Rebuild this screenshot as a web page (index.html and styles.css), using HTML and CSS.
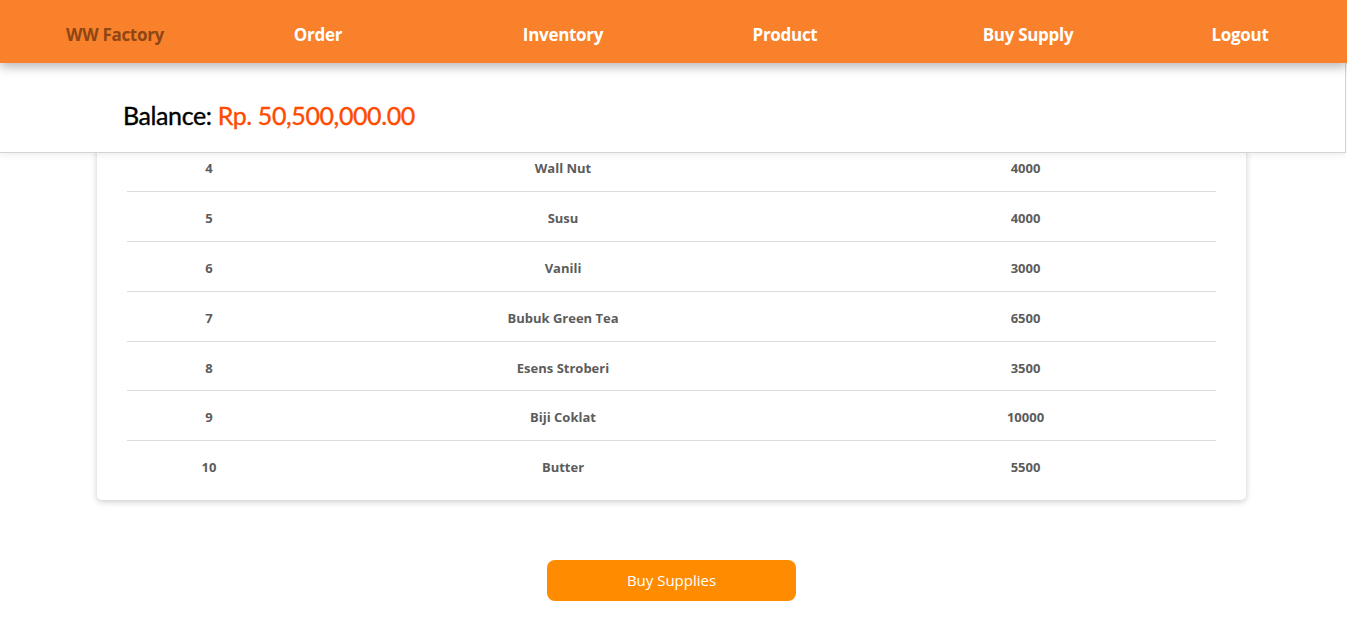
FILE: index.html
```html
<!DOCTYPE html>
<html lang="en">
<head>
<meta charset="utf-8">
<title>Buy Supply - WW Factory</title>
<link rel="stylesheet" href="styles.css">
</head>
<body>
<header class="top">
  <nav class="nav">
    <a class="nav-item brand">WW Factory</a>
    <a class="nav-item">Order</a>
    <a class="nav-item">Inventory</a>
    <a class="nav-item">Product</a>
    <a class="nav-item">Buy Supply</a>
    <a class="nav-item">Logout</a>
  </nav>
  <div class="balance-bar">
    <span class="balance-label">Balance:</span> <span class="balance-amount">Rp. 50,500,000.00</span>
  </div>
</header>
<main class="main">
  <section class="card">
    <table class="supply-table">
      <tbody>
        <tr><td class="c-id">4</td><td class="c-name">Wall Nut</td><td class="c-price">4000</td></tr>
        <tr><td class="c-id">5</td><td class="c-name">Susu</td><td class="c-price">4000</td></tr>
        <tr><td class="c-id">6</td><td class="c-name">Vanili</td><td class="c-price">3000</td></tr>
        <tr><td class="c-id">7</td><td class="c-name">Bubuk Green Tea</td><td class="c-price">6500</td></tr>
        <tr><td class="c-id">8</td><td class="c-name">Esens Stroberi</td><td class="c-price">3500</td></tr>
        <tr><td class="c-id">9</td><td class="c-name">Biji Coklat</td><td class="c-price">10000</td></tr>
        <tr><td class="c-id">10</td><td class="c-name">Butter</td><td class="c-price">5500</td></tr>
      </tbody>
    </table>
  </section>
  <div class="actions">
    <button class="buy-btn">Buy Supplies</button>
  </div>
</main>
</body>
</html>
```

FILE: styles.css
```css
html, body {
  margin: 0;
  padding: 0;
  background: #ffffff;
}

body {
  font-family: "Open Sans", "Noto Sans", sans-serif;
  overflow: hidden;
}

.top {
  position: relative;
  z-index: 2;
}

.nav {
  height: 63px;
  background: #f9812b;
  display: grid;
  grid-template-columns: 230px 176px 314px 130px 356px 68px;
  align-items: center;
  box-shadow: 0 4px 10px rgba(0, 0, 0, 0.28);
  position: relative;
  z-index: 3;
}

.nav-item {
  text-align: center;
  color: #ffffff;
  font-weight: 700;
  font-size: 17px;
  letter-spacing: -0.3px;
  line-height: 1;
  padding-top: 6px;
  white-space: nowrap;
}

.nav-item.brand {
  color: #8e4614;
}

.balance-bar {
  width: 1222px;
  height: 89px;
  background: #ffffff;
  border-right: 1px solid #d4d4d4;
  border-bottom: 1px solid #d4d4d4;
  box-shadow: 0 3px 6px rgba(0, 0, 0, 0.06);
  display: flex;
  align-items: center;
  padding-left: 123px;
  padding-top: 14px;
  box-sizing: content-box;
  font-family: "Lato", sans-serif;
  font-size: 25px;
  letter-spacing: -0.4px;
  -webkit-text-stroke: 0.35px currentColor;
  height: 75px;
}

.balance-label {
  color: #000000;
  margin-right: 6px;
}

.balance-amount {
  color: #ff4a00;
}

.main {
  width: 1343px;
  display: flex;
  flex-direction: column;
  align-items: center;
}

.card {
  width: 1149px;
  margin-top: -11px;
  background: #ffffff;
  border-radius: 5px;
  box-shadow: 0 2px 6px rgba(0, 0, 0, 0.2);
  padding: 0 30px 9px;
  box-sizing: border-box;
}

.supply-table {
  width: 1089px;
  border-collapse: collapse;
  table-layout: fixed;
}

.supply-table td {
  height: 49.8px;
  padding: 0;
  text-align: center;
  vertical-align: middle;
  color: #5c5c5c;
  font-weight: 700;
  font-size: 13px;
  padding-top: 3px;
  box-sizing: border-box;
}

.supply-table tr {
  border-bottom: 1px solid #dcdcdc;
}

.supply-table tr:last-child {
  border-bottom: none;
}

.c-id { width: 164px; }
.c-name { width: 544px; }
.c-price { width: 381px; }

.actions {
  margin-top: 60px;
  display: flex;
  justify-content: center;
}

.buy-btn {
  width: 249px;
  height: 41px;
  border: none;
  border-radius: 8px;
  background: #ff8c00;
  color: #ffffff;
  font-family: "Open Sans", sans-serif;
  font-size: 15px;
  cursor: pointer;
}
```
